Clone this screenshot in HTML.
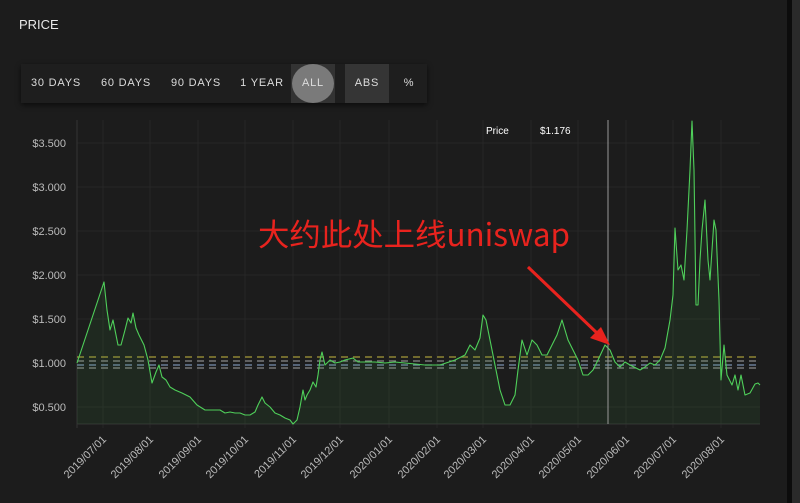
<!DOCTYPE html>
<html><head><meta charset="utf-8"><style>
body{margin:0;width:800px;height:503px;background:#1c1c1c;overflow:hidden;font-family:"Liberation Sans","Noto Sans CJK SC",sans-serif;position:relative}
.title{position:absolute;left:19px;top:17px;color:#e8e8e8;font-size:13px}
.bar{position:absolute;left:21px;top:64px;width:406px;height:39px;background:#1e1e1e;box-shadow:0 2px 5px rgba(0,0,0,.6)}
.b{position:absolute;top:0;height:39px;line-height:39px;color:#ddd;font-size:11px;letter-spacing:.8px;text-align:center}
.edge{position:absolute;left:787px;top:0;width:5px;height:503px;background:#0c0c0c}
.edge2{position:absolute;left:792px;top:0;width:8px;height:503px;background:#2a2a2a}
</style></head><body>
<div class="title">PRICE</div>
<div class="bar">
<div class="b" style="left:4px;width:62px">30 DAYS</div>
<div class="b" style="left:74px;width:62px">60 DAYS</div>
<div class="b" style="left:144px;width:62px">90 DAYS</div>
<div class="b" style="left:213px;width:56px">1 YEAR</div>
<div class="b" style="left:270px;width:44px;background:#333"><div style="position:absolute;left:1px;top:0;width:42px;height:39px;border-radius:50%;background:#7a7a7a"></div><span style="position:relative">ALL</span></div>
<div class="b" style="left:324px;width:44px;background:#353535">ABS</div>
<div class="b" style="left:372px;width:32px">%</div>
</div>
<svg width="800" height="503" style="position:absolute;left:0;top:0">
<g stroke="#262626" stroke-width="1">
<line x1="77" y1="143" x2="760" y2="143"/><line x1="77" y1="187" x2="760" y2="187"/><line x1="77" y1="231" x2="760" y2="231"/><line x1="77" y1="275" x2="760" y2="275"/><line x1="77" y1="319" x2="760" y2="319"/><line x1="77" y1="407" x2="760" y2="407"/>
<line x1="103" y1="120" x2="103" y2="428"/><line x1="150" y1="120" x2="150" y2="428"/><line x1="198" y1="120" x2="198" y2="428"/><line x1="245" y1="120" x2="245" y2="428"/><line x1="293" y1="120" x2="293" y2="428"/><line x1="340" y1="120" x2="340" y2="428"/><line x1="389" y1="120" x2="389" y2="428"/><line x1="437" y1="120" x2="437" y2="428"/><line x1="483" y1="120" x2="483" y2="428"/><line x1="531" y1="120" x2="531" y2="428"/><line x1="578" y1="120" x2="578" y2="428"/><line x1="626" y1="120" x2="626" y2="428"/><line x1="673" y1="120" x2="673" y2="428"/><line x1="721" y1="120" x2="721" y2="428"/>
</g>
<line x1="77" y1="424" x2="760" y2="424" stroke="#333"/>
<line x1="77" y1="120" x2="77" y2="428" stroke="#333"/>
<g font-size="11" fill="#bbb" text-anchor="end">
<text x="66" y="147">$3.500</text><text x="66" y="191">$3.000</text><text x="66" y="235">$2.500</text><text x="66" y="279">$2.000</text><text x="66" y="323">$1.500</text><text x="66" y="367">$1.000</text><text x="66" y="411">$0.500</text>
</g>
<g font-size="11" fill="#bbb" text-anchor="end">
<text transform="translate(107,440) rotate(-45)">2019/07/01</text>
<text transform="translate(154,440) rotate(-45)">2019/08/01</text>
<text transform="translate(202,440) rotate(-45)">2019/09/01</text>
<text transform="translate(249,440) rotate(-45)">2019/10/01</text>
<text transform="translate(297,440) rotate(-45)">2019/11/01</text>
<text transform="translate(344,440) rotate(-45)">2019/12/01</text>
<text transform="translate(393,440) rotate(-45)">2020/01/01</text>
<text transform="translate(441,440) rotate(-45)">2020/02/01</text>
<text transform="translate(487,440) rotate(-45)">2020/03/01</text>
<text transform="translate(535,440) rotate(-45)">2020/04/01</text>
<text transform="translate(582,440) rotate(-45)">2020/05/01</text>
<text transform="translate(630,440) rotate(-45)">2020/06/01</text>
<text transform="translate(677,440) rotate(-45)">2020/07/01</text>
<text transform="translate(725,440) rotate(-45)">2020/08/01</text>
</g>
<g stroke-dasharray="7,5" stroke-width="1.3">
<line x1="77" y1="357" x2="760" y2="357" stroke="#a59a3a"/>
<line x1="77" y1="361" x2="760" y2="361" stroke="#888"/>
<line x1="77" y1="365" x2="760" y2="365" stroke="#7a8fb0"/>
<line x1="77" y1="368" x2="760" y2="368" stroke="#888"/>
</g>
<polygon fill="rgba(60,160,70,0.10)" points="77,424 77,363 104,282 107,310 110,330 113,320 118,345 121,345 125,330 128,318 131,323 133,313 136,328 139,335 144,345 148,360 152,383 156,372 159,365 162,377 166,380 170,387 175,390 182,393 190,397 197,405 205,410 212,410 220,410 225,413 230,412 235,413 240,413 245,415 250,415 255,412 258,405 262,397 265,403 270,407 275,413 280,415 285,418 290,420 293,424 297,420 300,407 303,390 305,400 307,395 310,390 313,382 316,387 318,375 320,360 322,352 325,365 330,360 335,363 340,362 345,360 353,358 358,362 365,362 375,362 385,363 395,362 405,363 415,364 425,365 440,365 455,360 465,355 470,345 475,350 480,338 483,315 486,320 490,340 495,365 500,390 505,405 510,405 515,395 518,370 522,340 527,355 532,340 537,345 542,355 547,355 552,345 557,335 562,320 565,330 568,340 573,350 578,360 583,375 588,375 593,370 598,360 605,345 610,350 615,362 620,367 625,362 630,365 640,370 645,367 650,363 655,365 660,360 665,348 670,320 673,295 675,228 678,270 681,265 684,280 687,230 690,170 692,121 694,170 696,305 698,305 700,260 702,230 705,200 708,260 710,280 714,220 716,230 719,300 721,380 724,345 727,375 732,385 735,375 738,390 741,375 745,395 750,393 755,384 758,383 760,385 760,424"/>
<polyline fill="none" stroke="#4fcf5a" stroke-width="1.1" stroke-linejoin="round" points="77,363 104,282 107,310 110,330 113,320 118,345 121,345 125,330 128,318 131,323 133,313 136,328 139,335 144,345 148,360 152,383 156,372 159,365 162,377 166,380 170,387 175,390 182,393 190,397 197,405 205,410 212,410 220,410 225,413 230,412 235,413 240,413 245,415 250,415 255,412 258,405 262,397 265,403 270,407 275,413 280,415 285,418 290,420 293,424 297,420 300,407 303,390 305,400 307,395 310,390 313,382 316,387 318,375 320,360 322,352 325,365 330,360 335,363 340,362 345,360 353,358 358,362 365,362 375,362 385,363 395,362 405,363 415,364 425,365 440,365 455,360 465,355 470,345 475,350 480,338 483,315 486,320 490,340 495,365 500,390 505,405 510,405 515,395 518,370 522,340 527,355 532,340 537,345 542,355 547,355 552,345 557,335 562,320 565,330 568,340 573,350 578,360 583,375 588,375 593,370 598,360 605,345 610,350 615,362 620,367 625,362 630,365 640,370 645,367 650,363 655,365 660,360 665,348 670,320 673,295 675,228 678,270 681,265 684,280 687,230 690,170 692,121 694,170 696,305 698,305 700,260 702,230 705,200 708,260 710,280 714,220 716,230 719,300 721,380 724,345 727,375 732,385 735,375 738,390 741,375 745,395 750,393 755,384 758,383 760,385"/>
<line x1="608" y1="120" x2="608" y2="424" stroke="#999" stroke-width="1"/>
<text x="486" y="134" font-size="10" fill="#fff">Price</text>
<text x="540" y="134" font-size="10" fill="#fff">$1.176</text>
<text x="258" y="246" font-size="31" fill="#e8231e" textLength="312" lengthAdjust="spacingAndGlyphs" font-family="'Noto Sans CJK SC','Liberation Sans',sans-serif">大约此处上线uniswap</text>
<line x1="528" y1="267" x2="598" y2="334" stroke="#e8231e" stroke-width="3"/>
<polygon points="610,345 590,338 601,327" fill="#e8231e"/>
</svg>
<div class="edge"></div><div class="edge2"></div>
</body></html>
